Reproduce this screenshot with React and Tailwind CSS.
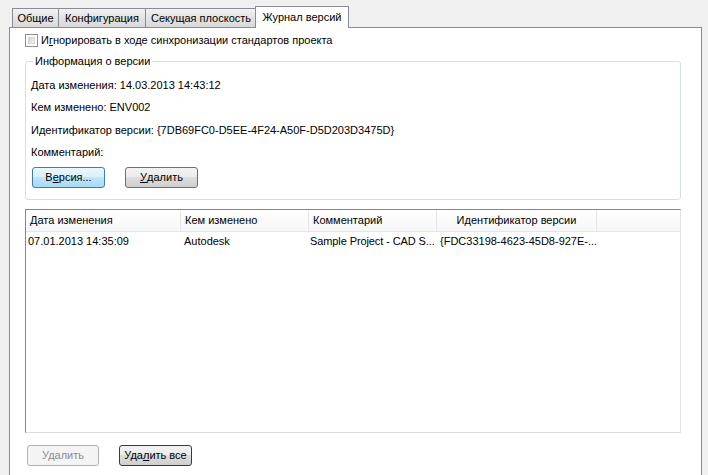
import React from "react";

const btn =
  "h-[21px] rounded-[3px] border text-[11px] leading-none flex items-center justify-center";
const normalBtn =
  "border-[#707070] bg-[linear-gradient(#f2f2f2_0%,#ebebeb_50%,#dddddd_50%,#cfcfcf_100%)] text-black";

const Tab = ({ children, active, w }) =>
  active ? (
    <div className={`relative z-10 -ml-[2px] h-[22px] ${w} flex items-center justify-center bg-white border border-b-0 border-[#898c95] text-black`}>
      {children}
    </div>
  ) : (
    <div className={`h-[19px] mb-px ${w} flex items-center justify-center border border-b-0 border-l-0 first:border-l border-[#898c95] bg-[linear-gradient(#f2f2f2,#e3e3e3_50%,#d9d9d9)] text-black`}>
      {children}
    </div>
  );

const columns = [
  { title: "Дата изменения", w: "w-[155px]", cls: "pl-[4px]" },
  { title: "Кем изменено", w: "w-[128px]", cls: "pl-[4px]" },
  { title: "Комментарий", w: "w-[128px]", cls: "pl-[4px]" },
  { title: "Идентификатор версии", w: "w-[160px]", cls: "justify-center" },
];

const row = [
  { text: "07.01.2013 14:35:09", w: "w-[155px]", cls: "pl-[2px]" },
  { text: "Autodesk", w: "w-[128px]", cls: "pl-[3px]" },
  { text: "Sample Project - CAD S...", w: "w-[128px]", cls: "pl-[1px] tracking-[-0.1px]" },
  { text: "{FDC33198-4623-45D8-927E-...", w: "w-[160px]", cls: "pl-[3px]" },
];

export default function App() {
  return (
    <div className="w-[708px] h-[475px] overflow-hidden bg-[#f0f0f0] font-['Liberation_Sans',sans-serif] text-[11px] text-black">
      {/* tabs */}
      <div className="h-[28px] flex items-end pl-[12px]">
        <Tab w="w-[47px]">Общие</Tab>
        <Tab w="w-[87px]">Конфигурация</Tab>
        <Tab w="w-[111px]">Секущая плоскость</Tab>
        <Tab active w="w-[94px]">Журнал версий</Tab>
      </div>

      {/* tab page */}
      <div className="-mt-px ml-[9px] w-[693px] h-[460px] bg-white border border-[#898c95] pt-[6px]">
        <div className="flex items-center ml-[15px] h-[13px]">
          <div className="w-[13px] h-[13px] border border-[#8e8f8f] bg-white p-[2px]">
            <div className="w-full h-full bg-[linear-gradient(135deg,#cbcfd5,#f6f6f6)] border border-[#d4d4d4]" />
          </div>
          <span className="ml-[3px]">
            И<span className="underline">г</span>норировать в ходе синхронизации стандартов проекта
          </span>
        </div>

        {/* group box */}
        <div className="relative mt-[14px] ml-[15px] w-[656px] h-[139px] border border-[#d5dfe5] rounded-[3px] pl-[5px] pt-[12px]">
          <div className="absolute -top-[8px] left-[7px] bg-white px-[2px] leading-[14px]">
            Информация о версии
          </div>
          <div className="flex flex-col">
            <div className="h-[22px] flex items-center">Дата изменения: 14.03.2013 14:43:12</div>
            <div className="h-[23px] flex items-center">Кем изменено: ENV002</div>
            <div className="h-[22px] flex items-center">
              Идентификатор версии: {"{7DB69FC0-D5EE-4F24-A50F-D5D203D3475D}"}
            </div>
            <div className="h-[22px] flex items-center">Комментарий:</div>
          </div>
          <div className="flex gap-[20px] mt-[4px] ml-[1px]">
            <button className={`${btn} w-[73px] border-[#3c7fb1] bg-[linear-gradient(#eaf6fd_0%,#d9f0fc_50%,#bee6fd_50%,#a7d9f5_100%)]`}>
              В<span className="underline">е</span>рсия...
            </button>
            <button className={`${btn} w-[73px] ${normalBtn}`}>
              <span className="underline">У</span>далить
            </button>
          </div>
        </div>

        {/* list view */}
        <div className="mt-[9px] ml-[15px] w-[656px] h-[224px] border border-[#828790] border-r-[#e3e3e3] border-b-[#dcdcdc]">
          <div className="h-[22px] flex bg-[linear-gradient(#ffffff,#f6f7f8)] border-b border-[#e5e5e5]">
            {columns.map((c) => (
              <div key={c.title} className={`${c.w} ${c.cls} h-full flex items-center border-r border-[#e5e5e5]`}>
                {c.title}
              </div>
            ))}
          </div>
          <div className="h-[18px] flex items-center">
            {row.map((c) => (
              <div key={c.text} className={`${c.w} ${c.cls} whitespace-nowrap`}>
                {c.text}
              </div>
            ))}
          </div>
        </div>

        {/* bottom buttons */}
        <div className="flex gap-[20px] mt-[12px] ml-[17px]">
          <button className={`${btn} w-[72px] border-[#adb2b5] bg-[#f4f4f4] text-[#8d8d8d]`}>Удалить</button>
          <button className={`${btn} w-[73px] border-[#3a3a3a] bg-[linear-gradient(#f2f2f2_0%,#ebebeb_50%,#dddddd_50%,#cfcfcf_100%)]`}>
            Уда<span className="underline">л</span>ить все
          </button>
        </div>
      </div>
    </div>
  );
}
